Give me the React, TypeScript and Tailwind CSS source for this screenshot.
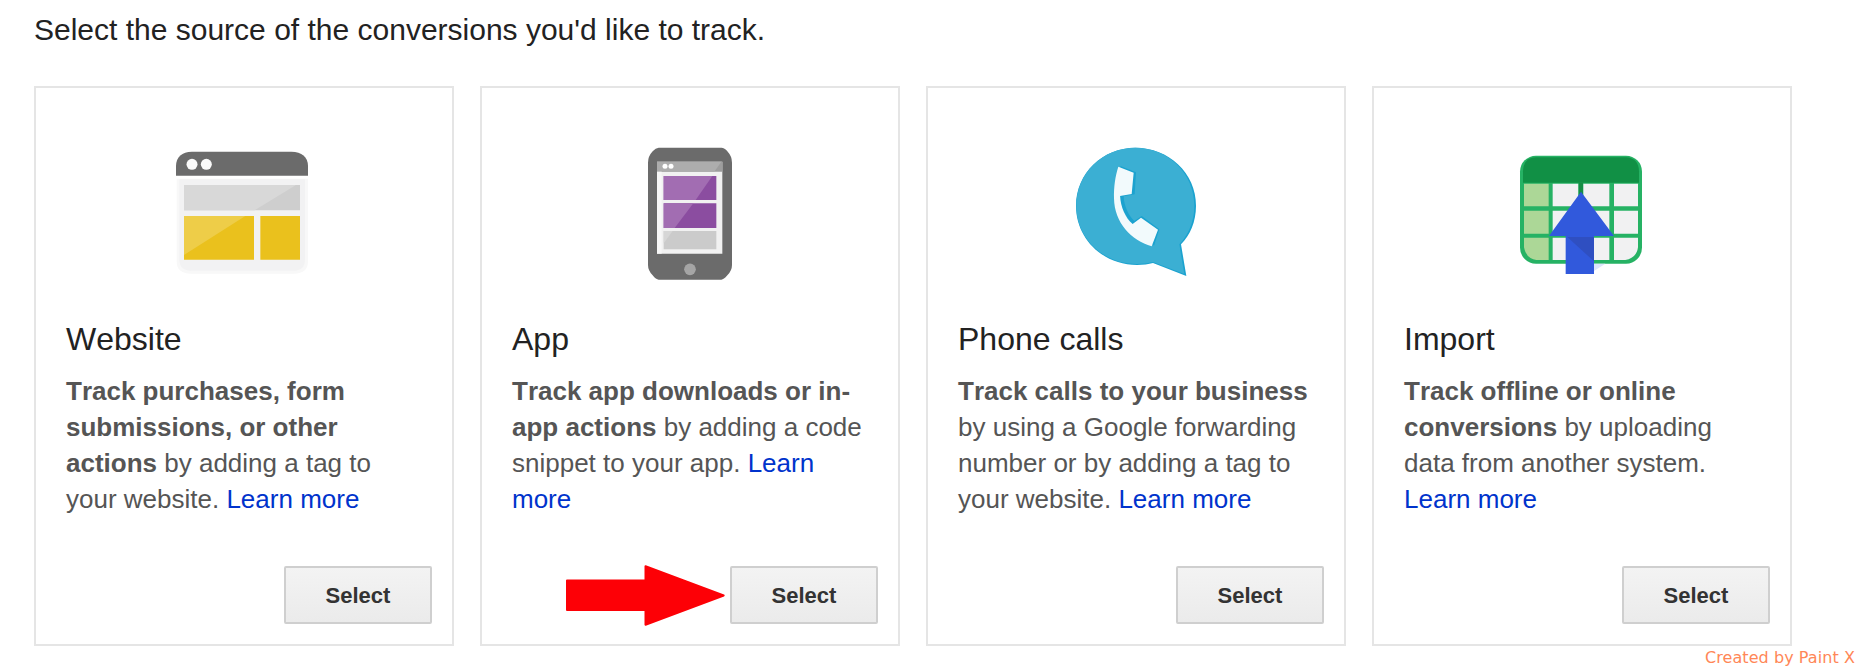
import type { ReactNode } from 'react';

function WebsiteIcon() {
  return (
    <svg className="h-40 w-40" viewBox="12 0 480 480">
      <path d="M50 146H444V394Q444 431 402 431H92Q50 431 50 394Z" fill="#f8f8f8" />
      <path d="M58 148H435V388Q435 422 402 422H92Q58 422 58 388Z" fill="#f2f2f3" />
      <path d="M48 137V107Q50 66 96 65H394Q442 66 444 107V137Z" fill="#6b6b6b" />
      <circle cx="96" cy="103" r="16.500" fill="#fafafa" />
      <circle cx="139" cy="103" r="16.500" fill="#fafafa" />
      <path d="M72 165H420V241H72Z" fill="#cecece" />
      <path d="M72 165H408L284 241H72Z" fill="#d8d8d8" />
      <path d="M72 258H282V389H72Z" fill="#eac11d" />
      <path d="M72 258H256L72 375Z" fill="#eecd48" />
      <path d="M301 258H420V389H301Z" fill="#eac11d" />
    </svg>
  );
}

function AppIcon() {
  return (
    <svg className="h-40 w-40" viewBox="-30 0 480 480">
      <path d="M116 53H304Q314 53 322 64Q336 79 336 98V405Q336 422 322 436Q311 449 304 449H116Q108 449 98 436Q84 422 84 405V98Q84 79 98 64Q107 53 116 53Z" fill="#6b6b6b" />
      <path d="M111 95H307V371H111Z" fill="#f1f1f1" />
      <path d="M111 95H307V125H111Z" fill="#9d9d9d" />
      <path d="M111 95H304L283 125H111Z" fill="#adadad" />
      <circle cx="135" cy="109" r="7.500" fill="#fff" />
      <circle cx="153" cy="109" r="7.500" fill="#fff" />
      <path d="M111 125H125V371H111Z" fill="#f8f8f8" />
      <path d="M131 138H289V210H131Z" fill="#8b4da0" />
      <path d="M131 138H277L227 210H131Z" fill="#a26db2" />
      <path d="M131 220H289V294H131Z" fill="#8b4da0" />
      <path d="M131 220H220L164 294H131Z" fill="#a26db2" />
      <path d="M131 303H289V358H131Z" fill="#cbcbcb" />
      <path d="M131 303H158L131 340Z" fill="#d6d6d6" />
      <circle cx="210" cy="418" r="17.500" fill="#a5a5a5" />
    </svg>
  );
}

function PhoneIcon() {
  return (
    <svg className="h-40 w-40" viewBox="-12 0 480 480">
      <path
        d="M226 53C326 53 408 128 408 227C408 276 390 315 363 343L379 438L279 399C266 402 249 405 231 405C130 405 48 327 48 227C48 129 129 53 226 53Z"
        fill="#1ba2cf"
      />
      <path
        d="M226 53C323 53 403 128 403 227C403 276 385 314 358 343L373 432L279 396C264 400 248 402 231 402C131 402 49 326 49 227C49 129 129 53 226 53Z"
        fill="#3bafd3"
      />
      <path d="M181 108L228 127L224 193L191 199C192 228 206 258 223 273L245 258L298 298L282 347L273 338L220 290L182 230Z" fill="#1ba2cf" />
      <path
        d="M175 110L221 128L215 192L180 198C182 229 196 265 218 282L243 263L294 299L275 349C214 331 163 279 162 205C161 171 166 137 175 110Z"
        fill="#f2fafc"
      />
    </svg>
  );
}

function ImportIcon() {
  return (
    <svg className="h-40 w-40" viewBox="6 -30 480 480">
      <rect x="60" y="47" width="366" height="324" rx="48" fill="#26b264" />
      <path d="M69 128V94Q70 53 108 52H378Q416 54 417 94V128Z" fill="#119045" />
      <path d="M72 131H146V199H72ZM72 212H146V281H72ZM72 293H146V360H109Q78 356 72 322Z" fill="#acd797" />
      <path d="M158 131H235V199H158ZM250 131H328V199H250ZM342 131H414V199H342Z" fill="#f1f1f2" />
      <path d="M158 212H235V281H158ZM250 212H328V281H250ZM342 212H414V281H342Z" fill="#f1f1f2" />
      <path d="M158 293H235V360H158ZM250 293H328V360H250ZM342 293H414V322Q410 354 376 360H342Z" fill="#f1f1f2" />
      <path d="M236 128H249V170H236Z" fill="#168e45" />
      <path d="M282 371H316L282 393Z" fill="#dce5fc" />
      <path d="M243 155L342 288H282V402H197V288H147Z" fill="#3159dc" />
      <path d="M202 291H282V364Z" fill="#2f4fc1" />
    </svg>
  );
}

function LearnMore() {
  return (
    <a href="#" className="text-[#0033cc]">
      Learn more
    </a>
  );
}

function PointerArrow() {
  return (
    <svg className="mr-[5px] h-[62px] w-[160px]" viewBox="0 0 160 62">
      <path
        d="M2 16.500H80.500V2.200L158.700 31.500L80.500 60.700V46H2Z"
        fill="#fd0006"
        stroke="#fd0006"
        strokeWidth="2"
        strokeLinejoin="round"
      />
    </svg>
  );
}

interface SourceCardProps {
  icon: ReactNode;
  title: string;
  children: ReactNode;
  highlighted?: boolean;
}

function SourceCard({ icon, title, children, highlighted = false }: SourceCardProps) {
  return (
    <section className="flex h-[560px] w-[420px] flex-col border-2 border-[#e5e5e5] px-[30px] pt-[42px]">
      <div className="flex justify-center">{icon}</div>
      <h2 className="mt-[31px] text-[32px] leading-9 text-[#222] [font-kerning:none]">{title}</h2>
      <p className="mt-4 text-[26px] leading-9 whitespace-nowrap text-[#555] [font-kerning:none]">
        {children}
      </p>
      <div className="mt-auto -mr-[10px] mb-[18px] flex h-[62px] items-center justify-end">
        {highlighted && <PointerArrow />}
        <button
          type="button"
          className="h-[58px] w-[148px] rounded-[2px] border-2 border-[#cfcfcf] bg-linear-to-b from-[#f3f3f3] to-[#ebebeb] text-[22px] font-bold text-[#333]"
        >
          Select
        </button>
      </div>
    </section>
  );
}

export default function App() {
  return (
    <main className="flex h-[672px] w-[1860px] flex-col overflow-hidden bg-white pt-[13px] font-['Liberation_Sans',Arial,sans-serif]">
      <h1 className="pl-[34px] text-[30px] leading-[34px] text-[#222]">
        Select the source of the conversions you'd like to track.
      </h1>
      <div className="mt-[39px] flex gap-[26px] pl-[34px]">
        <SourceCard icon={<WebsiteIcon />} title="Website">
          <b>Track purchases, form</b>
          <br />
          <b>submissions, or other</b>
          <br />
          <b>actions</b> by adding a tag to
          <br />
          your website. <LearnMore />
        </SourceCard>
        <SourceCard icon={<AppIcon />} title="App" highlighted>
          <b>Track app downloads or in-</b>
          <br />
          <b>app actions</b> by adding a code
          <br />
          snippet to your app.{' '}
          <a href="#" className="text-[#0033cc]">
            Learn
            <br />
            more
          </a>
        </SourceCard>
        <SourceCard icon={<PhoneIcon />} title="Phone calls">
          <b>Track calls to your business</b>
          <br />
          by using a Google forwarding
          <br />
          number or by adding a tag to
          <br />
          your website. <LearnMore />
        </SourceCard>
        <SourceCard icon={<ImportIcon />} title="Import">
          <b>Track offline or online</b>
          <br />
          <b>conversions</b> by uploading
          <br />
          data from another system.
          <br />
          <LearnMore />
        </SourceCard>
      </div>
      <footer className="pr-[5px] text-right font-['DejaVu_Sans',Verdana,sans-serif] text-[16px] leading-6 tracking-[0.07px] text-[#ff8757]">
        Created by Paint X
      </footer>
    </main>
  );
}
